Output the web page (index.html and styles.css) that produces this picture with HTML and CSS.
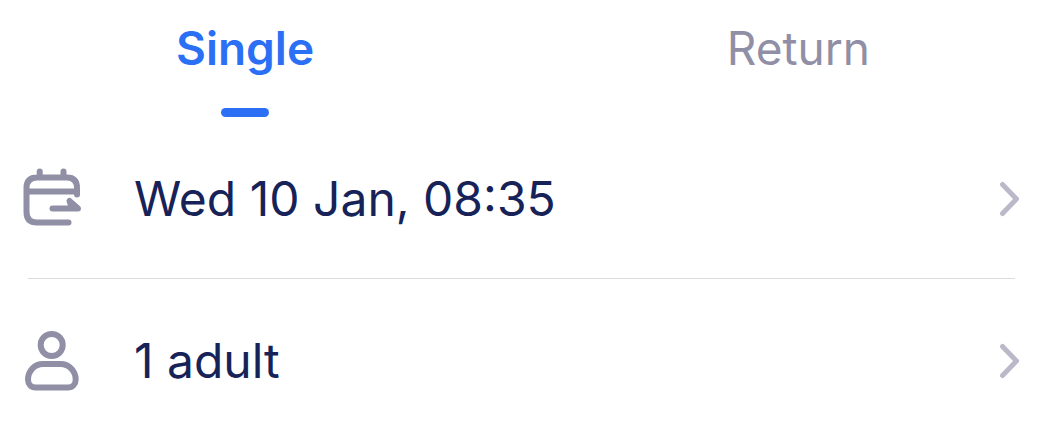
FILE: index.html
```html
<!DOCTYPE html>
<html lang="en">
<head>
<meta charset="utf-8">
<meta name="viewport" content="width=device-width, initial-scale=1">
<title>Journey options</title>
<link rel="stylesheet" href="styles.css">
</head>
<body>
<main class="planner">
  <div class="tabs" role="tablist" aria-label="Ticket type">
    <button class="tab tab-active" type="button" role="tab" aria-selected="true">Single</button>
    <button class="tab" type="button" role="tab" aria-selected="false">Return</button>
  </div>
  <div class="options">
    <button class="option" type="button">
      <svg class="icon" viewBox="0 0 60 62" aria-hidden="true">
        <path d="M46.5 54.5H15Q4.5 54.5 4.5 44V20Q4.5 9.500 15 9.500H45Q55 9.500 55 20V26.500M4.500 23.500H55M17.700 9V3.500M41.500 9V3.500M30.500 40.500H56L47.500 33L50 40"/>
      </svg>
      <span class="label">Wed 10 Jan, 08:35</span>
      <svg class="chevron" viewBox="0 0 22 36" aria-hidden="true"><path d="M3.500 3.500L17.500 18L3.500 32.500"/></svg>
    </button>
    <button class="option" type="button">
      <svg class="icon" viewBox="0 0 60 62" aria-hidden="true">
        <circle cx="29.700" cy="15" r="11"/>
        <path d="M21 34H38.500C47 34 53.700 41 53.700 49.500C53.700 54 50.500 57.500 46 57.500H13.700C9 57.500 6 54 6 49.500C6 41 12.500 34 21 34Z"/>
      </svg>
      <span class="label">1 adult</span>
      <svg class="chevron" viewBox="0 0 22 36" aria-hidden="true"><path d="M3.500 3.500L17.500 18L3.500 32.500"/></svg>
    </button>
  </div>
</main>
</body>
</html>
```
FILE: styles.css
```css
* {
  box-sizing: border-box;
}

body {
  margin: 0;
  background: #fff;
  color: #172358;
  font-family: Inter, "Liberation Sans", sans-serif;
}

button {
  margin: 0;
  padding: 0;
  border: 0;
  background: none;
  color: inherit;
  font: inherit;
  cursor: pointer;
}

.tabs {
  display: flex;
  justify-content: space-between;
  align-items: flex-start;
  padding: 20px 178px 0 176px;
}

.tab {
  display: flex;
  flex-direction: column;
  align-items: center;
  gap: 32px;
  color: #908fa5;
  font-size: 46px;
  line-height: 56px;
}

.tab-active {
  color: #2b6ff5;
  font-weight: 600;
}

.tab-active::after {
  content: "";
  width: 48px;
  height: 9px;
  border-radius: 5px;
  background: currentColor;
}

.options {
  display: flex;
  flex-direction: column;
}

.option {
  display: flex;
  align-items: center;
  width: 100%;
  padding: 51px 27px 40px 22px;
  text-align: left;
}

.option:first-child {
  padding-bottom: 49px;
  background: linear-gradient(#dcdcdc, #dcdcdc) 28px 100% / calc(100% - 61px) 1px no-repeat;
}

.icon {
  flex: none;
  width: 60px;
  height: 62px;
  fill: none;
  stroke: #908fa5;
  stroke-width: 6;
  stroke-linecap: round;
  stroke-linejoin: round;
}

.label {
  flex: 1;
  padding-left: 52px;
  font-size: 48px;
  line-height: 60px;
}

.chevron {
  flex: none;
  width: 22px;
  height: 36px;
  fill: none;
  stroke: #bbb9c9;
  stroke-width: 5;
  stroke-linecap: round;
  stroke-linejoin: round;
}
```
